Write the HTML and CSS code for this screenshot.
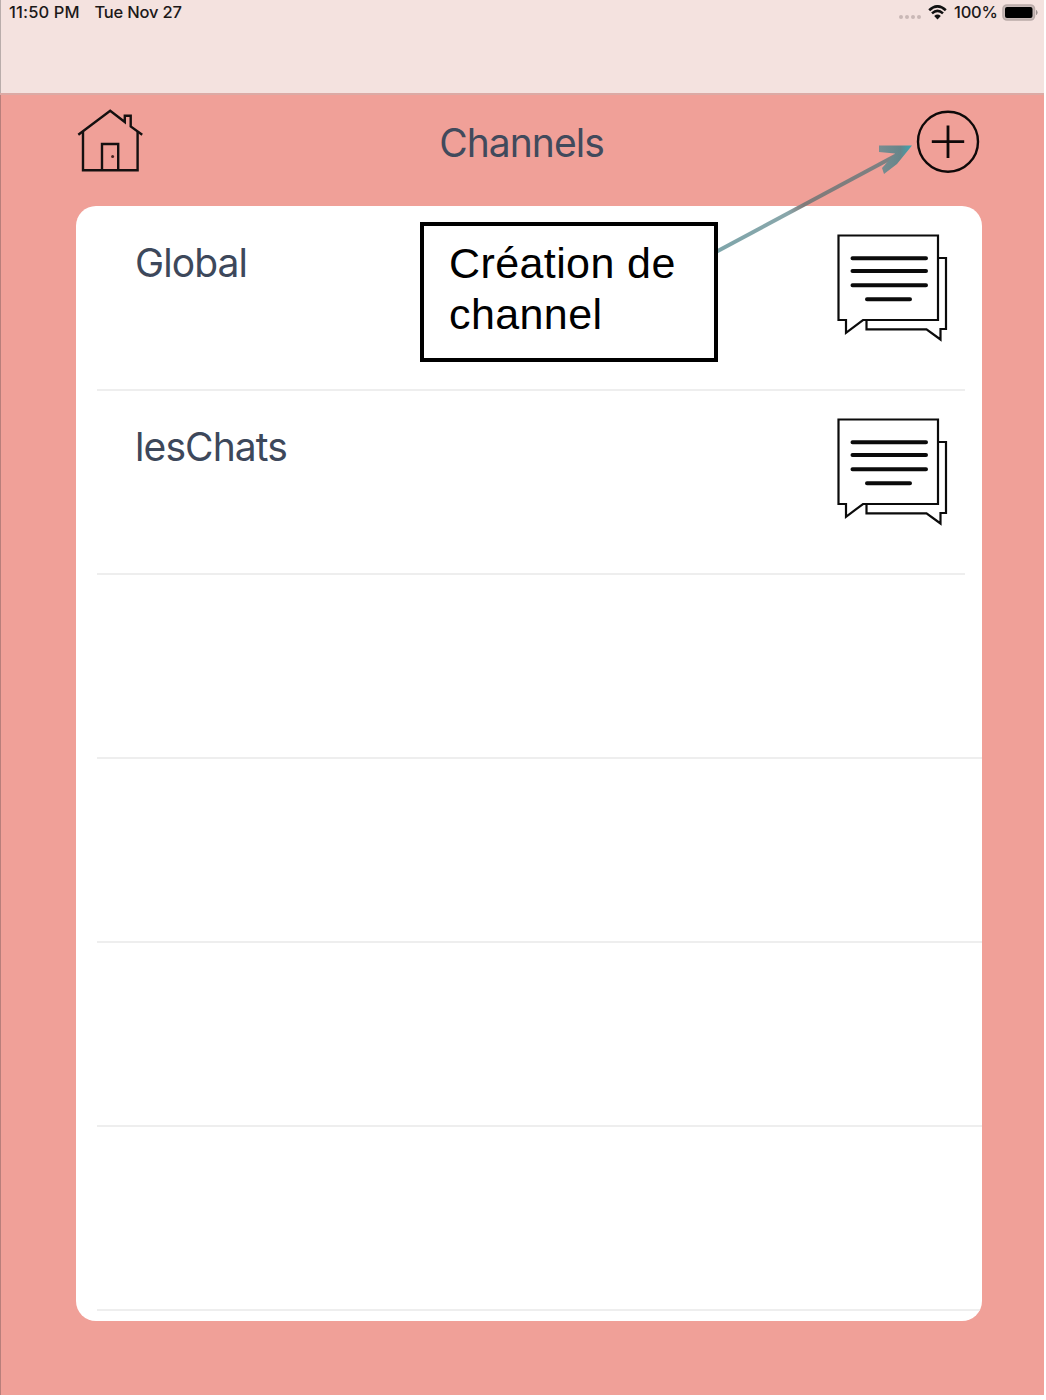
FILE: index.html
```html
<!DOCTYPE html>
<html lang="fr">
<head>
<meta charset="utf-8">
<title>Channels</title>
<link rel="stylesheet" href="styles.css">
</head>
<body>
<svg class="symbols" width="0" height="0">
  <symbol id="chat" viewBox="0 0 112 108">
    <g fill="none" stroke="#0b0b0b" stroke-width="2.2">
      <path d="M1.500 1.500H101V86H26L9 98.800V86H1.500Z"/>
      <path d="M101 24H109V95H103.500V105.500L89.500 95.300H29.500V86"/>
      <path d="M15.500 24.300H89M15.500 37H89M15.500 51.200H89M30 65.300H73" stroke-width="4" stroke-linecap="round"/>
    </g>
  </symbol>
</svg>
<div class="app">
  <header class="status">
    <div class="status-left"><span class="time">11:50 PM</span><span class="date">Tue Nov 27</span></div>
    <div class="status-right">
      <span class="dots"><i></i><i></i><i></i><i></i></span>
      <svg class="wifi" width="19" height="15" viewBox="0 0 19 15">
        <path d="M1.200 5.200Q9.500-2.500 17.800 5.200M4 8.400Q9.500 3.500 15 8.400" fill="none" stroke="#111" stroke-width="2.600"/>
        <path d="M6.200 10.900Q9.500 8.300 12.800 10.900L9.500 14.400Z" fill="#111"/>
      </svg>
      <span class="percent">100%</span>
      <svg class="battery" width="37" height="17" viewBox="0 0 37 17">
        <rect x="1" y="1" width="31.500" height="15" rx="4" fill="#c9bab8" stroke="#b9aaa8" stroke-width="1.600"/>
        <rect x="3" y="3" width="27.500" height="11" rx="2" fill="#000"/>
        <path d="M34.500 6.500Q35.800 8.500 34.500 10.500Z" fill="#9d9190" stroke="#9d9190"/>
      </svg>
    </div>
  </header>
  <nav class="toolbar">
    <svg class="home" width="68" height="66" viewBox="0 0 68 66">
      <g fill="none" stroke="#141010" stroke-width="2.400">
        <path d="M1.300 25.700L33.200 1.800L47.800 13V6.700H53.700V17.500L65.200 25.700"/>
        <path d="M6 22.500V61.200H60.600V22.500M25 61.200V35H41.200V61.200"/>
      </g>
      <circle cx="35.600" cy="47.500" r="1.500" fill="#4a2523"/>
    </svg>
    <h1 class="title">Channels</h1>
    <svg class="add" width="64" height="64" viewBox="0 0 64 64">
      <g fill="none" stroke="#0e0909" stroke-width="2.400">
        <circle cx="32" cy="31.700" r="30"/>
        <path d="M15.800 31.700H48.200M32 15.500V47.900" stroke-width="2.800"/>
      </g>
    </svg>
  </nav>
  <main class="card">
    <div class="row filled"><span class="name">Global</span><svg class="chat"><use href="#chat"/></svg></div>
    <div class="row filled"><span class="name">lesChats</span><svg class="chat"><use href="#chat"/></svg></div>
    <div class="row"></div>
    <div class="row"></div>
    <div class="row"></div>
    <div class="row"></div>
  </main>
  <svg class="arrow" width="204" height="120" viewBox="0 0 204 120">
    <defs>
      <linearGradient id="shaft" gradientUnits="userSpaceOnUse" x1="3" y1="110" x2="182" y2="13">
        <stop offset="0" stop-color="#7ea5aa"/><stop offset=".4" stop-color="#89a7ab"/><stop offset=".49" stop-color="#817a79"/><stop offset="1" stop-color="#7c8284"/>
      </linearGradient>
      <linearGradient id="head"><stop offset="0" stop-color="#798d91"/><stop offset=".65" stop-color="#66858a"/><stop offset="1" stop-color="#39a8b4"/></linearGradient>
    </defs>
    <path d="M1 112L182 15" stroke="url(#shaft)" stroke-width="4"/>
    <path d="M199 4.500L166 4.500V11L182 12.500L169 27L171 33L184 23Z" fill="url(#head)"/>
  </svg>
  <div class="callout">Création de<br>channel</div>
</div>
</body>
</html>
```
FILE: styles.css
```css
* { box-sizing: border-box; }
body { margin: 0; background: #fff; font-family: Inter, "Noto Sans", sans-serif; }
.symbols { position: absolute; }
.app {
  position: relative;
  width: 1044px;
  height: 1395px;
  background: #f0a098;
  overflow: hidden;
  box-shadow: inset 1px 0 #b97f7b;
}
.status {
  height: 95px;
  padding: 0 6px 0 9px;
  display: flex;
  justify-content: space-between;
  background: #f4e2df;
  border-bottom: 2px solid #dcaaa5;
  box-shadow: inset 1px 0 #b9adab;
  color: #1c1919;
  font-size: 16.5px;
  font-weight: 500;
  line-height: 25px;
}
.status-left { display: flex; gap: 15px; }
.time { width: 71px; white-space: nowrap; letter-spacing: .15px; }
.date { letter-spacing: -.2px; margin-left: -.5px; }
.status-right { display: flex; height: 25px; align-items: center; }
.dots { display: flex; gap: 2px; margin: 8px 7px 0 0; }
.dots i { width: 4px; height: 4px; border-radius: 50%; background: #c9b8b6; }
.wifi { margin-right: 7px; }
.percent { width: 43px; margin-right: 5px; white-space: nowrap; letter-spacing: -.2px; }
.battery { margin-right: -1px; }
.toolbar {
  height: 111px;
  padding: 14px 64px 0 77px;
  display: flex;
  justify-content: space-between;
  align-items: flex-start;
}
.title {
  margin: 9px 18px 0 0;
  font-size: 39px;
  font-weight: 400;
  line-height: 50px;
  letter-spacing: -.95px;
  color: #414a5c;
}
.add { margin-top: 1px; }
.card {
  width: 906px;
  height: 1115px;
  margin-left: 76px;
  padding: 1px 0 0 21px;
  border-radius: 20px;
  background: #fff;
  overflow: hidden;
}
.row { height: 184px; border-bottom: 2px solid #eee; }
.row.filled {
  margin-right: 17px;
  padding: 27px 16px 0 38px;
  display: flex;
  justify-content: space-between;
  align-items: flex-start;
}
.name { margin-top: 4px; font-size: 39px; line-height: 50px; letter-spacing: -.9px; color: #3d485b; }
.chat { width: 112px; height: 108px; }
.arrow { position: absolute; left: 713px; top: 141px; }
.callout {
  position: absolute;
  left: 420px;
  top: 222px;
  width: 298px;
  height: 140px;
  padding: 12px 0 0 25px;
  border: 4.500px solid #000;
  background: #fff;
  color: #000;
  font: 43px/51px "Liberation Sans", Arial, sans-serif;
  letter-spacing: .4px;
}
```
